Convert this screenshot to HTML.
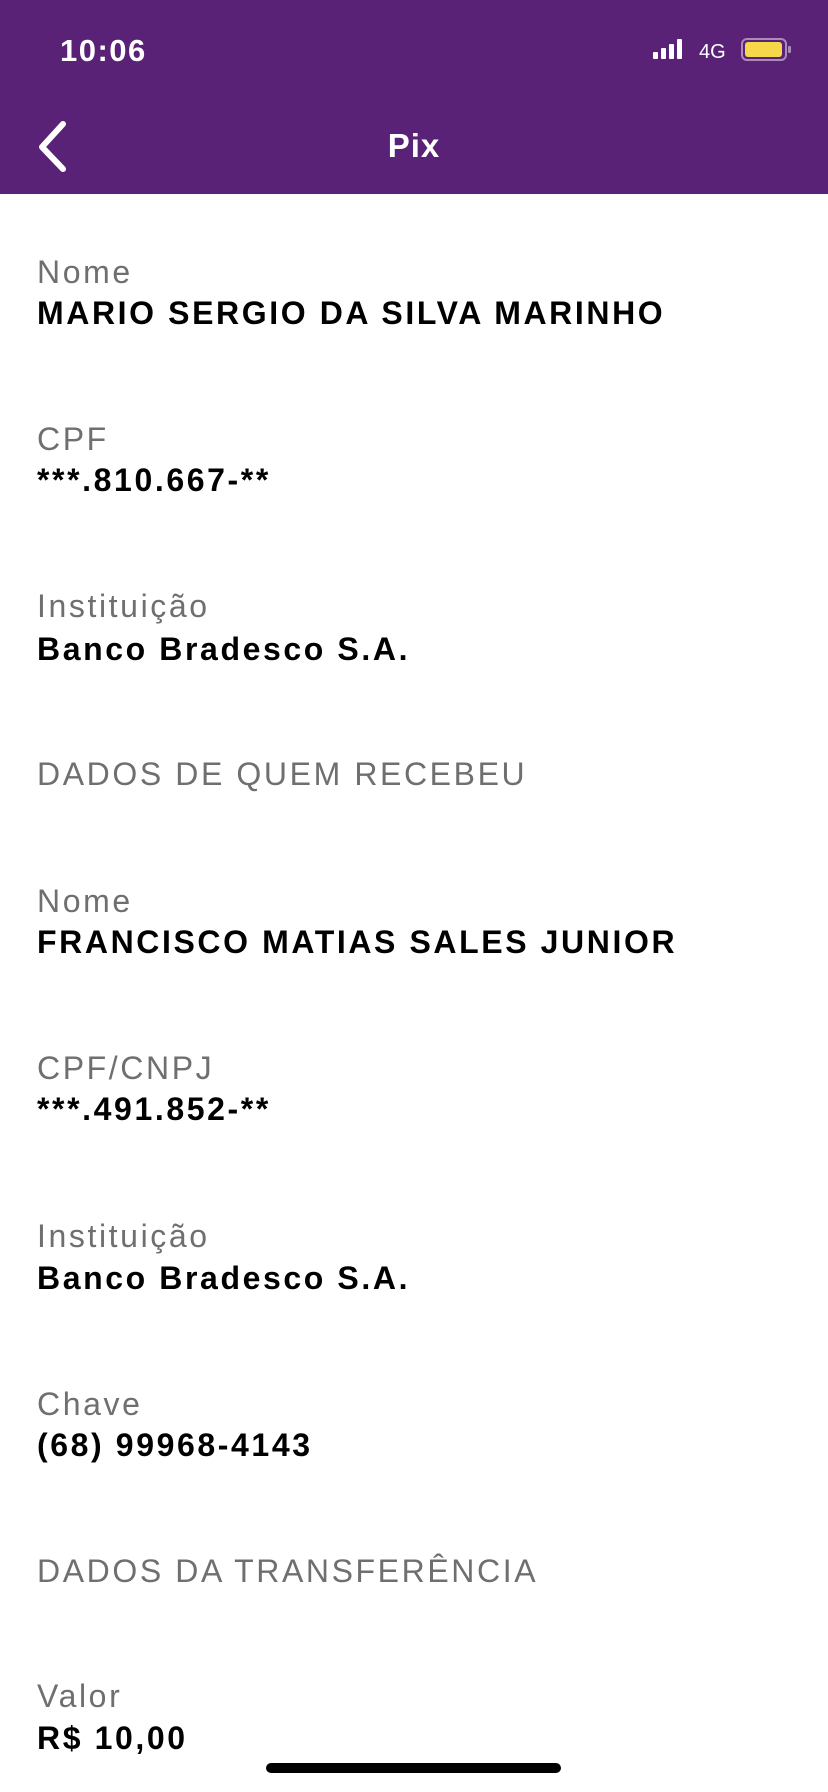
<!DOCTYPE html>
<html><head><meta charset="utf-8"><style>
body{margin:0;width:828px;height:1792px;background:#fff;position:relative;overflow:hidden;font-family:"Liberation Sans",sans-serif}
.hdr{position:absolute;left:0;top:0;width:828px;height:194px;background:#5a2277}
.t{position:absolute;left:37px;height:40px;line-height:40px;white-space:nowrap}
.l{font-size:32px;color:#6f6f6f;letter-spacing:2.6px}
.v{font-size:32px;font-weight:bold;color:#000;letter-spacing:2.6px}
</style></head><body>
<div class="hdr"></div>
<div style="position:absolute;left:60px;top:31px;line-height:40px;font-size:31px;color:#fff;font-weight:bold;letter-spacing:1.5px">10:06</div>
<svg style="position:absolute;left:650px;top:36px" width="150" height="28" viewBox="0 0 150 28">
<rect x="3" y="16" width="5" height="7" rx="1" fill="#fff"/><rect x="11" y="12" width="5" height="11" rx="1" fill="#fff"/><rect x="19" y="8" width="5" height="15" rx="1" fill="#fff"/><rect x="27" y="3" width="5" height="20" rx="1" fill="#fff"/>
<text x="49" y="22" font-family="Liberation Sans" font-size="20" fill="#fff">4G</text>
<rect x="92" y="3" width="44" height="21" rx="5" fill="none" stroke="#a88bb8" stroke-width="2"/>
<rect x="95" y="6" width="37" height="15" rx="3" fill="#f7d74a"/>
<rect x="138" y="10" width="3" height="7" rx="1" fill="#a88bb8"/>
</svg>
<svg style="position:absolute;left:34px;top:120px" width="36" height="52" viewBox="0 0 36 52"><path d="M29 4 L8 27 L29 49" fill="none" stroke="#fff" stroke-width="6" stroke-linecap="round" stroke-linejoin="round"/></svg>
<div style="position:absolute;left:0;width:828px;top:126px;text-align:center;line-height:40px;font-size:33px;font-weight:bold;color:#fff;letter-spacing:1px">Pix</div>

<div class="t l" style="top:252px">Nome</div>
<div class="t v" style="top:293px">MARIO SERGIO DA SILVA MARINHO</div>
<div class="t l" style="top:419px">CPF</div>
<div class="t v" style="top:460px">***.810.667-**</div>
<div class="t l" style="top:586px">Instituição</div>
<div class="t v" style="top:629px">Banco Bradesco S.A.</div>
<div class="t l" style="top:754px">DADOS DE QUEM RECEBEU</div>
<div class="t l" style="top:881px">Nome</div>
<div class="t v" style="top:922px">FRANCISCO MATIAS SALES JUNIOR</div>
<div class="t l" style="top:1048px">CPF/CNPJ</div>
<div class="t v" style="top:1089px">***.491.852-**</div>
<div class="t l" style="top:1216px">Instituição</div>
<div class="t v" style="top:1258px">Banco Bradesco S.A.</div>
<div class="t l" style="top:1384px">Chave</div>
<div class="t v" style="top:1425px">(68) 99968-4143</div>
<div class="t l" style="top:1551px">DADOS DA TRANSFERÊNCIA</div>
<div class="t l" style="top:1676px">Valor</div>
<div class="t v" style="top:1718px">R$ 10,00</div>
<div style="position:absolute;left:266px;top:1763px;width:295px;height:10px;border-radius:5px;background:#000"></div>
</body></html>
